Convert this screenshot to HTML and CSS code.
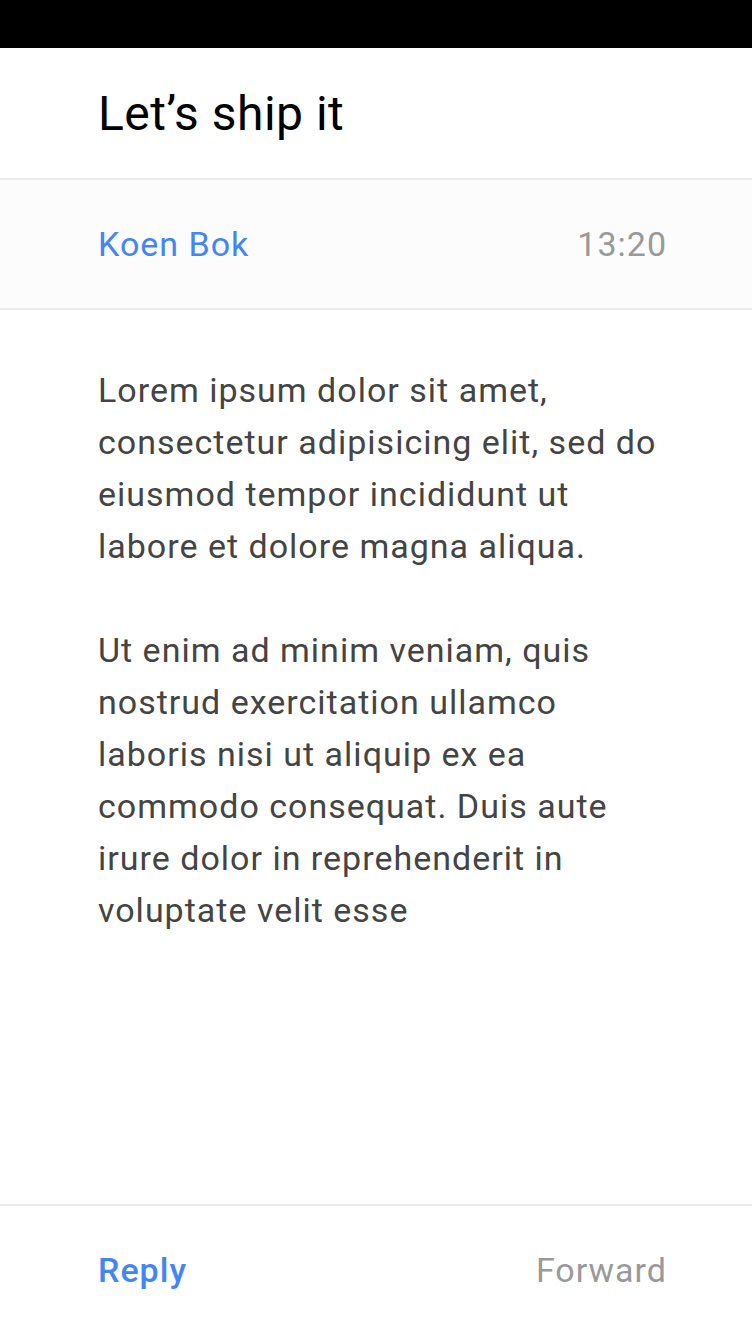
FILE: index.html
```html
<!DOCTYPE html>
<html>
<head>
<meta charset="utf-8">
<link rel="stylesheet" href="styles.css">
</head>
<body>
<div class="screen">
  <div class="statusbar"></div>
  <header class="header"><h1 class="title">Let’s ship it</h1></header>
  <div class="meta">
    <span class="sender">Koen Bok</span>
    <span class="time">13:20</span>
  </div>
  <main class="body">
    <p>Lorem ipsum dolor sit amet, consectetur adipisicing elit, sed do eiusmod tempor incididunt ut labore et dolore magna aliqua.</p>
    <p>Ut enim ad minim veniam, quis nostrud exercitation ullamco laboris nisi ut aliquip ex ea commodo consequat. Duis aute irure dolor in reprehenderit in voluptate velit esse</p>
  </main>
  <footer class="footer">
    <span class="reply">Reply</span>
    <span class="forward">Forward</span>
  </footer>
</div>
</body>
</html>
```
FILE: styles.css
```css
html, body {
  margin: 0;
  padding: 0;
  background: #fff;
}
body {
  font-family: Roboto, "Liberation Sans", sans-serif;
}
.screen {
  width: 752px;
  height: 1334px;
  display: flex;
  flex-direction: column;
  overflow: hidden;
}
.statusbar {
  height: 48px;
  background: #000;
  flex: none;
}
.header {
  height: 130px;
  flex: none;
  display: flex;
  align-items: center;
  padding: 0 86px 0 98px;
  border-bottom: 2px solid #ebebeb;
}
.title {
  margin: 0;
  font-size: 48px;
  font-weight: 400;
  letter-spacing: 0.5px;
  color: #000;
}
.meta {
  height: 128px;
  flex: none;
  display: flex;
  align-items: center;
  justify-content: space-between;
  padding: 0 86px 0 98px;
  background: #fcfcfc;
  border-bottom: 2px solid #ebebeb;
  font-size: 34px;
  letter-spacing: 1px;
}
.sender { color: #4285f4; }
.time { color: #999; margin-right: -1px; }
.body {
  flex: 1;
  padding: 54px 86px 0 98px;
  font-size: 34px;
  line-height: 52px;
  letter-spacing: 1px;
  color: #444;
}
.body p { margin: 0 0 52px 0; }
.footer {
  height: 128px;
  flex: none;
  display: flex;
  align-items: center;
  justify-content: space-between;
  padding: 0 86px 0 98px;
  border-top: 2px solid #ebebeb;
  font-size: 34px;
  letter-spacing: 1px;
}
.reply { color: #4285f4; font-weight: 500; }
.forward { color: #999; margin-right: -1px; }
```
